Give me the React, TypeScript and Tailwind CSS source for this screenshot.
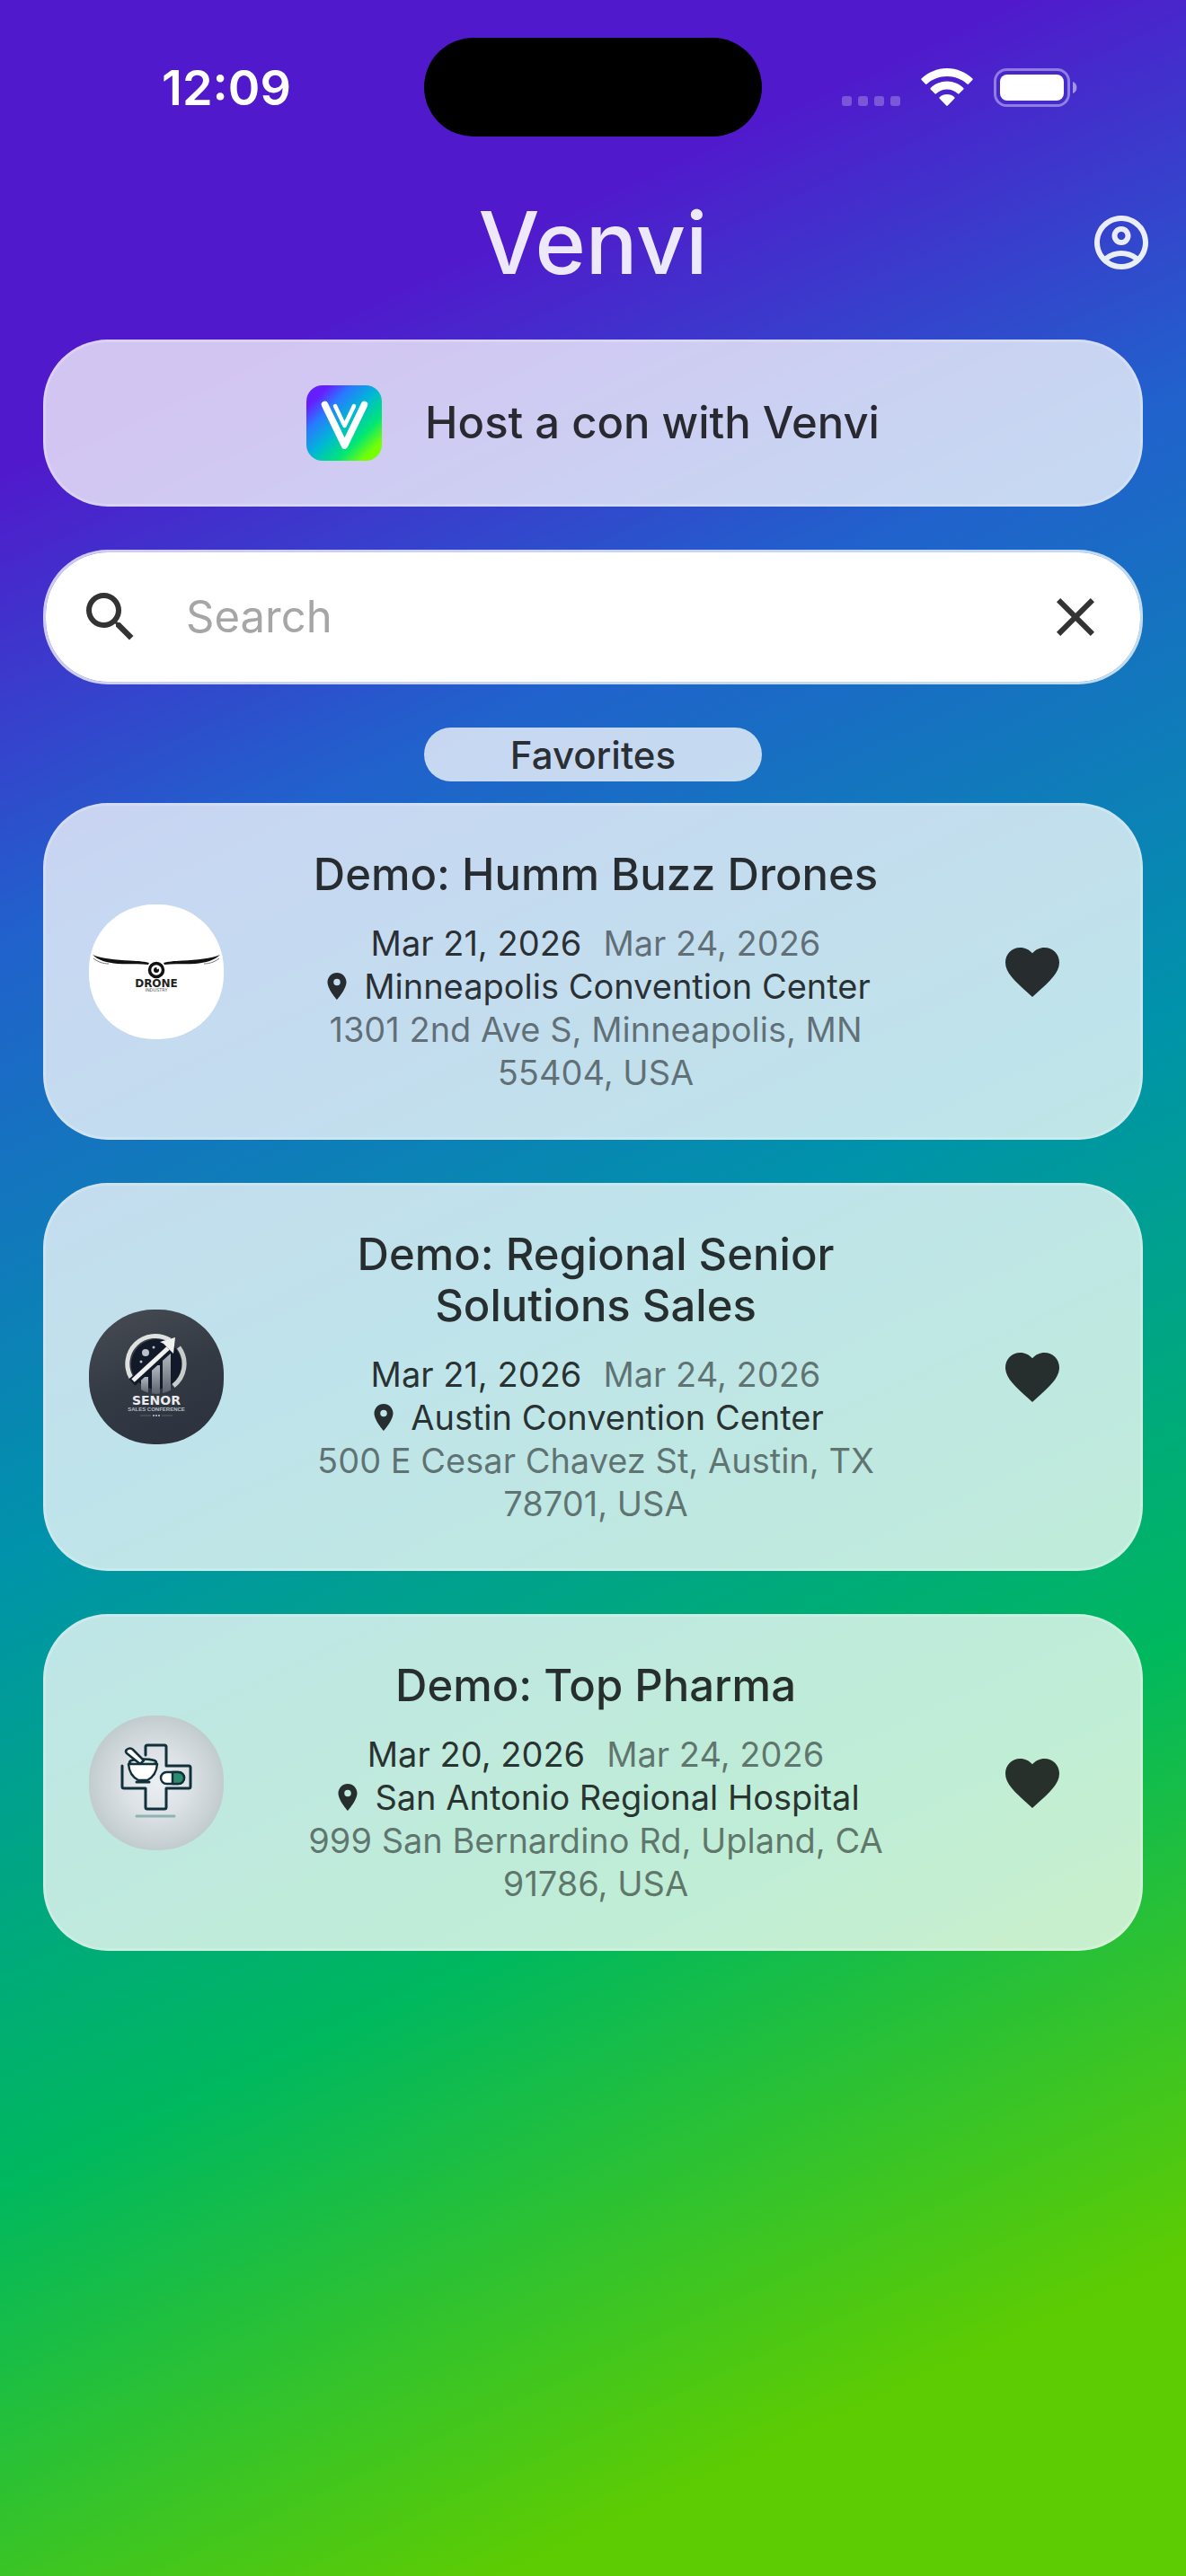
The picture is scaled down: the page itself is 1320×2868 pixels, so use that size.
import { useState } from "react";
import {
  MdClose,
  MdFavorite,
  MdFavoriteBorder,
  MdLocationOn,
  MdOutlineAccountCircle,
  MdSearch,
} from "react-icons/md";

type ConType = {
  title: string;
  start: string;
  end: string;
  venue: string;
  address: string;
  logo: React.ReactNode;
};

function VenviIcon() {
  return (
    <svg viewBox="0 0 84 84" className="size-21 shrink-0" aria-hidden="true">
      <defs>
        <linearGradient id="venviBg" x1="0" y1="0" x2="1" y2="1">
          <stop offset="0.15" stopColor="#651fff" />
          <stop offset="0.3" stopColor="#2979ff" />
          <stop offset="0.5" stopColor="#00b8d4" />
          <stop offset="0.7" stopColor="#00e676" />
          <stop offset="0.87" stopColor="#76ff03" />
        </linearGradient>
      </defs>
      <rect width="84" height="84" rx="18" fill="url(#venviBg)" />
      <g fill="none" stroke="#fff" strokeLinecap="round" strokeLinejoin="round">
        <path d="M20.500 21.500 L42.500 67 L64.500 21.500" strokeWidth="7.500" />
        <path d="M32 23 L42.500 45 L53 23" strokeWidth="4.500" />
      </g>
    </svg>
  );
}

function DroneLogo() {
  return (
    <svg viewBox="0 0 150 150" className="size-full" aria-hidden="true">
      <rect width="150" height="150" fill="#fff" />
      <path
        d="M4 56 C14 60 30 62 46 62.500 C56 63 62 63.500 67 65 L66 67 C56 65.500 44 67 32 66 C20 65 10 62 4 56Z"
        fill="#111"
      />
      <path
        d="M146 56 C136 60 120 62 104 62.500 C94 63 88 63.500 83 65 L84 67 C94 65.500 106 67 118 66 C130 65 140 62 146 56Z"
        fill="#111"
      />
      <path
        d="M5 60 C10 64 16 66 22 66 M145 60 C140 64 134 66 128 66"
        stroke="#777"
        strokeWidth="1"
        fill="none"
      />
      <circle cx="75" cy="73" r="7.500" fill="#fff" stroke="#111" strokeWidth="3.500" />
      <circle cx="75" cy="73" r="3" fill="#111" />
      <circle cx="76.500" cy="71" r="1.200" fill="#fff" />
      <text
        x="75"
        y="92"
        textAnchor="middle"
        fontFamily="DejaVu Sans, sans-serif"
        fontWeight="700"
        fontSize="12"
        fill="#222"
      >
        DRONE
      </text>
      <text
        x="75"
        y="97"
        textAnchor="middle"
        fontFamily="DejaVu Sans, sans-serif"
        fontSize="5"
        fill="#555"
      >
        INDUSTRY
      </text>
    </svg>
  );
}

function SenorLogo() {
  return (
    <svg viewBox="0 0 150 150" className="size-full" aria-hidden="true">
      <defs>
        <linearGradient id="senorBg" x1="0" y1="0" x2="0.4" y2="1">
          <stop offset="0" stopColor="#474c54" />
          <stop offset="0.6" stopColor="#343a44" />
          <stop offset="1" stopColor="#2e343f" />
        </linearGradient>
        <linearGradient id="senorBar" x1="0" y1="0" x2="0" y2="1">
          <stop offset="0" stopColor="#b4b9c0" />
          <stop offset="1" stopColor="#5b626d" />
        </linearGradient>
        <clipPath id="senorClip">
          <circle cx="75" cy="62" r="32" />
        </clipPath>
      </defs>
      <rect width="150" height="150" fill="url(#senorBg)" />
      <circle cx="75" cy="61" r="28" fill="#121a2a" />
      <path
        d="M47 76 A31 31 0 0 1 90 34"
        fill="none"
        stroke="#dfe1e0"
        strokeWidth="5"
      />
      <path
        d="M100 42 A31 31 0 0 1 94 85"
        fill="none"
        stroke="#c8cbcc"
        strokeWidth="5"
      />
      <g clipPath="url(#senorClip)" fill="url(#senorBar)">
        <rect x="58" y="75" width="8" height="19" />
        <rect x="70" y="62" width="9" height="32" />
        <rect x="82" y="48" width="9" height="46" />
      </g>
      <circle cx="63" cy="48" r="4" fill="#b9c0c9" />
      <circle cx="72" cy="42" r="1.500" fill="#b9c0c9" />
      <circle cx="58" cy="58" r="1.500" fill="#b9c0c9" />
      <path d="M48 81 L91 42" stroke="#121a2a" strokeWidth="10" />
      <path d="M49 79 L88 43" stroke="#f0f1ee" strokeWidth="5" />
      <path d="M96 31 L94 49 L89 44 L83 38 L79 36Z" fill="#f0f1ee" />
      <text
        x="75"
        y="106"
        textAnchor="middle"
        fontFamily="DejaVu Sans, sans-serif"
        fontWeight="700"
        fontSize="14"
        fill="#e9ebee"
      >
        SENOR
      </text>
      <text
        x="75"
        y="113"
        textAnchor="middle"
        fontFamily="Liberation Sans, sans-serif"
        fontWeight="700"
        fontSize="6"
        fill="#b9bec6"
      >
        SALES CONFERENCE
      </text>
      <path d="M57 118 H69 M81 118 H93" stroke="#5b626d" strokeWidth="1" />
      <path d="M71 118 H79" stroke="#a0a6af" strokeWidth="2" strokeDasharray="2 1" />
    </svg>
  );
}

function PharmaLogo() {
  return (
    <svg viewBox="0 0 150 150" className="size-full" aria-hidden="true">
      <defs>
        <radialGradient id="pharmaBg">
          <stop offset="0" stopColor="#e9eff3" />
          <stop offset="0.5" stopColor="#dbe1e5" />
          <stop offset="1" stopColor="#c2cccf" />
        </radialGradient>
      </defs>
      <rect width="150" height="150" fill="url(#pharmaBg)" />
      <g stroke="#12303a" strokeWidth="3" strokeLinejoin="round" strokeLinecap="round">
        <path
          d="M63 44 V35 Q63 33 65 33 H84 Q86 33 86 35 V56 H111 Q113 56 113 58 V79 Q113 81 111 81 H86 V102 Q86 104 84 104 H65 Q63 104 63 102 V81 H39 Q37 81 37 79 V56"
          fill="none"
        />
        <ellipse cx="60" cy="52" rx="15" ry="3.500" fill="#dbe8e8" strokeWidth="2.500" />
        <path
          d="M42 42 L57 54 L61 50 L49 38 Q46 35 42 38 Q40 40 42 42Z"
          fill="#fff"
          strokeWidth="2.500"
        />
        <path d="M44 54 H76 Q75 67 65 72 H55 Q45 67 44 54Z" fill="#fff" strokeWidth="2.500" />
        <path d="M53 74 H67" />
        <rect x="80" y="63" width="26" height="13" rx="6.500" fill="#fff" strokeWidth="2.500" />
        <path
          d="M93 63 H99.500 A6.500 6.500 0 0 1 99.500 76 H93Z"
          fill="#2d8c70"
          strokeWidth="2.500"
        />
      </g>
      <path d="M53 112 H95" stroke="#8fb3b2" strokeWidth="3" strokeLinecap="round" />
    </svg>
  );
}

const cons: ConType[] = [
  {
    title: "Demo: Humm Buzz Drones",
    start: "Mar 21, 2026",
    end: "Mar 24, 2026",
    venue: "Minneapolis Convention Center",
    address: "1301 2nd Ave S, Minneapolis, MN 55404, USA",
    logo: <DroneLogo />,
  },
  {
    title: "Demo: Regional Senior Solutions Sales",
    start: "Mar 21, 2026",
    end: "Mar 24, 2026",
    venue: "Austin Convention Center",
    address: "500 E Cesar Chavez St, Austin, TX 78701, USA",
    logo: <SenorLogo />,
  },
  {
    title: "Demo: Top Pharma",
    start: "Mar 20, 2026",
    end: "Mar 24, 2026",
    venue: "San Antonio Regional Hospital",
    address: "999 San Bernardino Rd, Upland, CA 91786, USA",
    logo: <PharmaLogo />,
  },
];

function StatusBar() {
  return (
    <div className="grid h-[194px] grid-cols-[1fr_376px_1fr] items-center">
      <span className="pl-8 text-center text-[54px] font-semibold text-white">
        12:09
      </span>
      <div className="h-[110px] rounded-full bg-black" />
      <div className="flex items-center justify-center gap-[23px] pr-8">
        <svg viewBox="0 0 65 43" className="h-[43px] w-[65px]" aria-hidden="true">
          <g fill="#fff" fillOpacity="0.25">
            <rect x="0" y="31" width="11" height="11" rx="3" />
            <rect x="18" y="31" width="11" height="11" rx="3" />
            <rect x="36" y="31" width="11" height="11" rx="3" />
            <rect x="54" y="31" width="11" height="11" rx="3" />
          </g>
        </svg>
        <svg viewBox="0 0 58 43" className="h-[43px] w-[58px]" aria-hidden="true">
          <g fill="#fff">
            <path d="M29 0 C18 0 8 4.500 0.500 11.500 Q0 12.200 0.600 13 L5 17.500 Q5.800 18.300 6.600 17.500 C12.600 12 20.500 9 29 9 C37.500 9 45.400 12 51.400 17.500 Q52.200 18.300 53 17.500 L57.400 13 Q58 12.200 57.500 11.500 C50 4.500 40 0 29 0Z" />
            <path d="M29 14.500 C22 14.500 15.500 17.300 10.700 22 Q10 22.700 10.700 23.500 L15.500 28.200 Q16.200 28.900 17 28.200 C20.300 25.200 24.500 23.500 29 23.500 C33.500 23.500 37.700 25.200 41 28.200 Q41.800 28.900 42.500 28.200 L47.300 23.500 Q48 22.700 47.300 22 C42.500 17.300 36 14.500 29 14.500Z" />
            <path d="M29 29 C25.800 29 23 30.200 20.700 32.200 Q20 33 20.700 33.800 L28.200 41.500 Q29 42.300 29.800 41.500 L37.300 33.800 Q38 33 37.300 32.200 C35 30.200 32.200 29 29 29Z" />
          </g>
        </svg>
        <svg viewBox="0 0 93 43" className="h-[43px] w-[93px]" aria-hidden="true">
          <rect
            x="1.500"
            y="1.500"
            width="82"
            height="40"
            rx="13"
            fill="none"
            stroke="#fff"
            strokeOpacity="0.4"
            strokeWidth="3"
          />
          <rect x="7" y="7" width="71" height="29" rx="8" fill="#fff" />
          <path d="M88 15 A7 7 0 0 1 88 28Z" fill="#fff" fillOpacity="0.5" />
        </svg>
      </div>
    </div>
  );
}

function ConCard(props: { data: ConType }) {
  const [liked, setLiked] = useState(true);

  return (
    <li className="flex items-center rounded-[72px] border-3 border-white/20 bg-white/75 p-12">
      <div className="size-[150px] shrink-0 overflow-hidden rounded-[72px]">
        {props.data.logo}
      </div>
      <div className="min-w-0 flex-1 px-18 text-center text-[38px] leading-[48px] text-black/80">
        <h2 className="mb-6 text-[49px] leading-[57px] font-medium">
          {props.data.title}
        </h2>
        <p className="flex justify-center gap-6">
          <span>{props.data.start}</span>
          <span className="text-black/50">{props.data.end}</span>
        </p>
        <p className="flex items-center justify-center gap-3">
          <MdLocationOn className="size-9 shrink-0" />
          {props.data.venue}
        </p>
        <p className="text-black/50">{props.data.address}</p>
      </div>
      <button
        type="button"
        aria-label="Favorite"
        aria-pressed={liked}
        className="flex size-36 shrink-0 items-center justify-center text-black/80"
        onClick={() => setLiked(!liked)}
      >
        {liked ? (
          <MdFavorite className="size-18" />
        ) : (
          <MdFavoriteBorder className="size-18" />
        )}
      </button>
    </li>
  );
}

export default function App() {
  const [query, setQuery] = useState("");

  const shown = cons.filter((con) =>
    con.title.toLowerCase().includes(query.toLowerCase())
  );

  return (
    <div className="min-h-screen bg-[linear-gradient(155deg,#5119cc_15%,#2161cc_30%,#0093aa_50%,#00b85e_70%,#5ecc02_90%)] font-['Inter',sans-serif]">
      <StatusBar />

      <header className="grid h-[152px] grid-cols-[1fr_auto_1fr] items-center px-9">
        <h1 className="col-start-2 text-[96px] leading-none font-medium text-white/90">
          Venvi
        </h1>
        <button
          type="button"
          aria-label="Account"
          className="justify-self-end text-white/90"
        >
          <MdOutlineAccountCircle className="size-18" />
        </button>
      </header>

      <main className="flex flex-col px-12 pt-8">
        <button
          type="button"
          className="flex h-[186px] items-center justify-center gap-12 rounded-[72px] border-3 border-white/20 bg-white/75 text-[49px] font-medium text-black/80"
        >
          <VenviIcon />
          Host a con with Venvi
        </button>

        <div className="mt-12 flex h-[150px] items-center gap-12 rounded-[72px] border-3 border-white/75 bg-white bg-clip-padding px-9 text-[#333]">
          <label htmlFor="search" aria-label="Search">
            <MdSearch className="size-18" />
          </label>
          <input
            id="search"
            type="text"
            placeholder="Search"
            value={query}
            onChange={(e) => setQuery(e.target.value)}
            className="min-w-0 flex-1 text-[49px] outline-none placeholder:text-[#a6a6a6]"
          />
          <button type="button" aria-label="Clear" onClick={() => setQuery("")}>
            <MdClose className="size-18" />
          </button>
        </div>

        <span className="mt-12 flex h-15 items-center self-center rounded-full bg-white/75 px-24 text-[42px] font-medium text-black/80">
          Favorites
        </span>

        <ul className="mt-6 flex flex-col gap-12">
          {shown.map((con) => (
            <ConCard key={con.title} data={con} />
          ))}
        </ul>
      </main>
    </div>
  );
}
